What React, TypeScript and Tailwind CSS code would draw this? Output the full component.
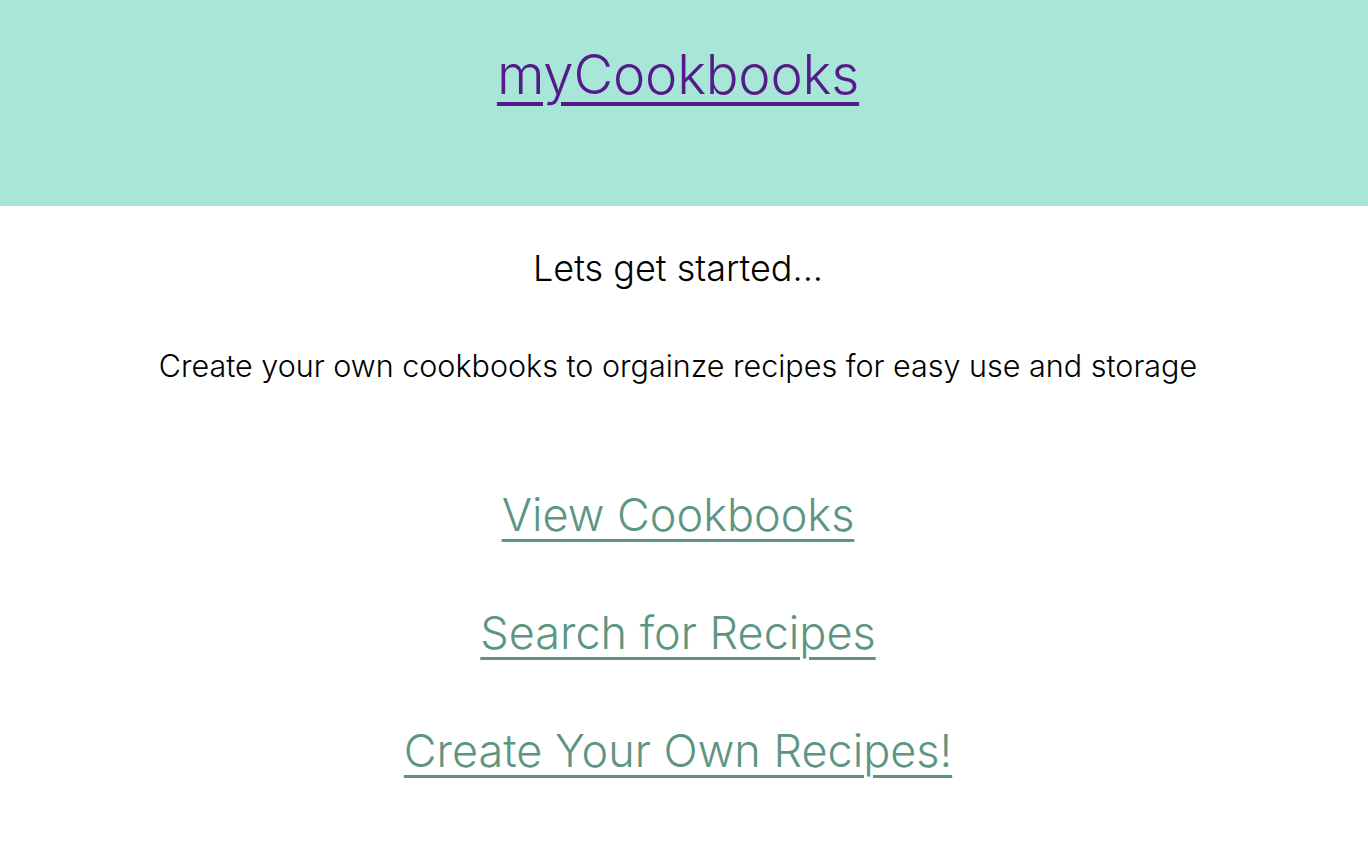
export default function App() {
  const links = ["View Cookbooks", "Search for Recipes", "Create Your Own Recipes!"];
  return (
    <div className="min-h-screen bg-white text-center font-light text-black" style={{ fontFamily: "Inter, 'Noto Sans', sans-serif" }}>
      <header className="h-[206px] bg-[#a8e7d7] pt-[38px] pr-[12px]">
        <a href="#" className="text-[54.5px] leading-[72px] tracking-[-0.2px] text-[#551a8b] underline decoration-[4px] underline-offset-[8px]">
          myCookbooks
        </a>
      </header>
      <main className="flex flex-col items-center pr-[12px]">
        <p className="mt-[40px] text-[36px] leading-[44px]">Lets get started...</p>
        <p className="mt-[56px] text-[30.5px] leading-[40px]">
          Create your own cookbooks to orgainze recipes for easy use and storage
        </p>
        <nav className="mt-[101px] flex flex-col items-center gap-[62px]">
          {links.map((l) => (
            <a key={l} href="#" className="text-[45px] leading-[56px] text-[#5c9682] underline decoration-[3px] underline-offset-[8px]">
              {l}
            </a>
          ))}
        </nav>
      </main>
    </div>
  );
}
